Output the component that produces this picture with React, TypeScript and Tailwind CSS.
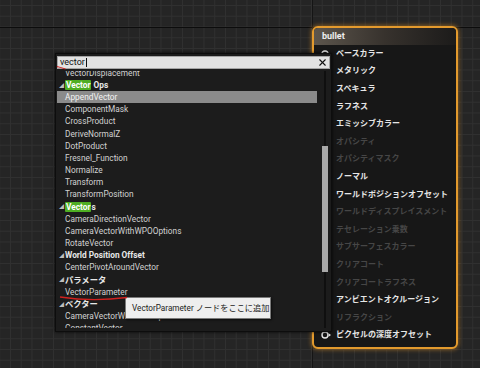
import { X } from "lucide-react"

type Row = { kind: "item" | "head"; text: string; match?: string; selected?: boolean }

const listRows: Row[] = [
  { kind: "item", text: "VectorDisplacement" },
  { kind: "head", text: " Ops", match: "Vector" },
  { kind: "item", text: "AppendVector", selected: true },
  { kind: "item", text: "ComponentMask" },
  { kind: "item", text: "CrossProduct" },
  { kind: "item", text: "DeriveNormalZ" },
  { kind: "item", text: "DotProduct" },
  { kind: "item", text: "Fresnel_Function" },
  { kind: "item", text: "Normalize" },
  { kind: "item", text: "Transform" },
  { kind: "item", text: "TransformPosition" },
  { kind: "head", text: "s", match: "Vector" },
  { kind: "item", text: "CameraDirectionVector" },
  { kind: "item", text: "CameraVectorWithWPOOptions" },
  { kind: "item", text: "RotateVector" },
  { kind: "head", text: "World Position Offset" },
  { kind: "item", text: "CenterPivotAroundVector" },
  { kind: "head", text: "パラメータ" },
  { kind: "item", text: "VectorParameter" },
  { kind: "head", text: "ベクター" },
  { kind: "item", text: "CameraVectorWithWPOOptions" },
  { kind: "item", text: "ConstantVector" },
]

const inputs = [
  { label: "ベースカラー", on: true, pin: "circle" },
  { label: "メタリック", on: true },
  { label: "スペキュラ", on: true },
  { label: "ラフネス", on: true },
  { label: "エミッシブカラー", on: true },
  { label: "オパシティ", on: false },
  { label: "オパシティマスク", on: false },
  { label: "ノーマル", on: true },
  { label: "ワールドポジションオフセット", on: true },
  { label: "ワールドディスプレイスメント", on: false },
  { label: "テセレーション乗数", on: false },
  { label: "サブサーフェスカラー", on: false },
  { label: "クリアコート", on: false },
  { label: "クリアコートラフネス", on: false },
  { label: "アンビエントオクルージョン", on: true },
  { label: "リフラクション", on: false },
  { label: "ピクセルの深度オフセット", on: true, pin: "arrow" },
]

function Pin({ type }: { type?: string }) {
  if (!type) return null
  return (
    <svg width="11" height="8" viewBox="0 0 11 8" className="shrink-0">
      <circle cx="4" cy="4" r="3" fill="none" stroke="#e6e6e6" strokeWidth="1.4" />
      {type === "arrow" && <path d="M7.6 2.2 L10 4 L7.6 5.8 Z" fill="#e6e6e6" />}
    </svg>
  )
}

function MaterialNode() {
  return (
    <div className="absolute left-[312px] top-[26px] w-[146px] h-[323px] rounded-[6px] border-2 border-[#e39a2d] bg-[#171717] shadow-[0_0_4px_1px_rgba(230,150,40,0.45)] overflow-hidden">
      <div className="h-[17px] flex items-center pl-[8px] bg-gradient-to-r from-[#5d564d] via-[#37322d] to-[#1c1b1a] text-[9px] font-bold text-[#eeeeee]">
        bullet
      </div>
      <div className="flex flex-col">
        {inputs.map((r) => (
          <div key={r.label} className="h-[17.6px] flex items-center pl-[7px] gap-[4px]">
            <span className="w-[11px] flex justify-center">
              <Pin type={r.pin} />
            </span>
            <span className={`text-[8px] leading-none font-bold ${r.on ? "text-[#e6e6e6]" : "text-[#464646]"}`}>
              {r.label}
            </span>
          </div>
        ))}
      </div>
    </div>
  )
}

function ListRow({ row }: { row: Row }) {
  if (row.kind === "head") {
    return (
      <div className="h-[12.17px] flex items-center pl-[2px] text-[8.3px] font-bold text-[#e8e8e8] whitespace-nowrap">
        <span className="w-[6px] text-[5px] text-[#bdbdbd] leading-none">◢</span>
        {row.match && (
          <span className="bg-[#4eae22] text-white rounded-[1px] px-[1px] leading-[10px]">{row.match}</span>
        )}
        <span className="whitespace-pre">{row.text}</span>
      </div>
    )
  }
  return (
    <div
      className={`h-[12.17px] flex items-center pl-[8px] text-[8.3px] whitespace-nowrap ${
        row.selected ? "bg-[#8b8b8b] text-[#f2f2f2]" : "text-[#d2d2d2]"
      }`}
    >
      {row.text}
    </div>
  )
}

function SearchPanel() {
  return (
    <div className="absolute left-[55px] top-[53px] w-[277px] h-[279px] bg-[#1c1c1c] border border-[#0d0d0d] px-[1px] pt-[2px] pb-[3px] flex flex-col shadow-[0_0_3px_rgba(0,0,0,0.8)]">
      <div className="h-[13px] bg-[#e2e2e2] border border-[#a5a5a5] flex items-center pl-[2px] pr-[1px]">
        <span className="text-[9px] text-[#111] leading-none">vector</span>
        <span className="w-px h-[9px] bg-[#111] ml-[1px]" />
        <X className="ml-auto text-[#111]" size={11} strokeWidth={2.4} />
      </div>
      <div className="flex flex-1 overflow-hidden mt-[2px]">
        <div className="flex-1 overflow-hidden pr-[3px]">
          <div className="mt-[-4px] flex flex-col">
            {listRows.map((r, i) => (
              <ListRow key={i} row={r} />
            ))}
          </div>
        </div>
        <div className="w-[10px] flex justify-center relative">
          <div className="w-[2px] h-full bg-[#0f0f0f]" />
          <div className="absolute left-[2px] top-[75px] w-[6px] h-[126px] bg-[#a9a9a9]" />
        </div>
      </div>
    </div>
  )
}

export default function App() {
  return (
    <div className="relative w-[480px] h-[368px] overflow-hidden bg-[#252525] font-['Roboto','Noto_Sans_CJK_JP',sans-serif]">
      <div className="absolute inset-0 bg-[linear-gradient(to_right,#303030_1px,transparent_1px),linear-gradient(to_bottom,#303030_1px,transparent_1px)] bg-[size:10.75px_10.75px] bg-[position:10px_5px]" />
      <div className="absolute left-0 right-0 top-[27px] h-[1px] bg-[#0c0c0c]" />
      <div className="absolute top-0 bottom-0 left-[312px] w-[1px] bg-[#151515]" />

      <MaterialNode />
      <SearchPanel />

      <div className="absolute left-[125px] top-[297px] w-[146px] h-[22px] bg-[#eeeeee] border border-[#7a7a7a] flex items-center px-[6px] text-[8.2px] text-[#222] whitespace-nowrap shadow-[1px_1px_2px_rgba(0,0,0,0.6)]">
        VectorParameter ノードをここに追加
      </div>

      <svg className="absolute inset-0 pointer-events-none" width="480" height="368">
        <path d="M57 66.5 Q61 67.5 65.5 69" stroke="#d0211f" strokeWidth="1.2" fill="none" />
        <path d="M60 297 Q92 302 127 297.5" stroke="#d0211f" strokeWidth="1.4" fill="none" />
      </svg>
    </div>
  )
}
